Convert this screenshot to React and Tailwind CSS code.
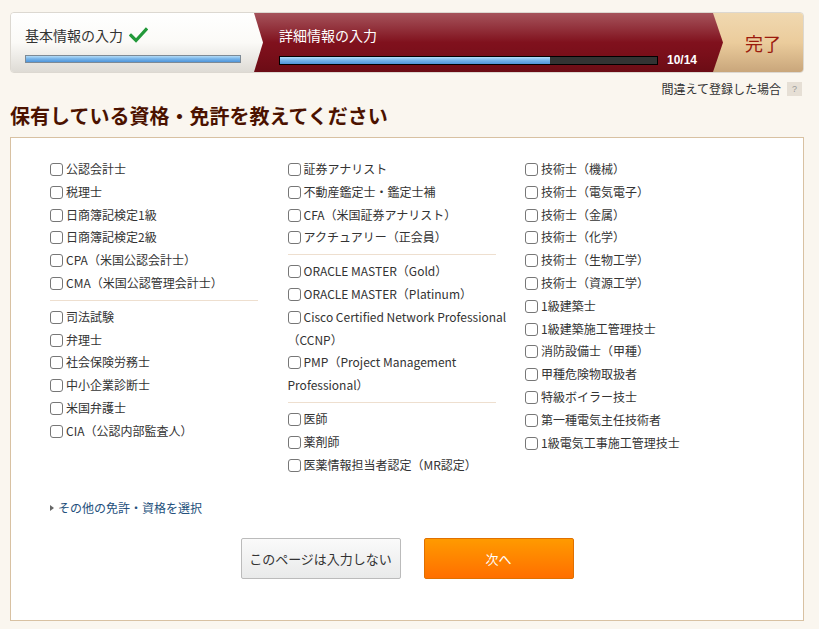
import React from 'react';

const col1a = ['公認会計士', '税理士', '日商簿記検定1級', '日商簿記検定2級', 'CPA（米国公認会計士）', 'CMA（米国公認管理会計士）'];
const col1b = ['司法試験', '弁理士', '社会保険労務士', '中小企業診断士', '米国弁護士', 'CIA（公認内部監査人）'];
const col2a = ['証券アナリスト', '不動産鑑定士・鑑定士補', 'CFA（米国証券アナリスト）', 'アクチュアリー（正会員）'];
const col2b = ['ORACLE MASTER（Gold）', 'ORACLE MASTER（Platinum）', ['Cisco Certified Network Professional', '（CCNP）'], ['PMP（Project Management', 'Professional）']];
const col2c = ['医師', '薬剤師', '医薬情報担当者認定（MR認定）'];
const col3 = ['技術士（機械）', '技術士（電気電子）', '技術士（金属）', '技術士（化学）', '技術士（生物工学）', '技術士（資源工学）', '1級建築士', '1級建築施工管理技士', '消防設備士（甲種）', '甲種危険物取扱者', '特級ボイラー技士', '第一種電気主任技術者', '1級電気工事施工管理技士'];

function Item({ label }) {
  const lines = Array.isArray(label) ? label : [label];
  return (
    <label className="block leading-[22.8px] whitespace-nowrap cursor-pointer">
      <span className="inline-block w-[13px] h-[13px] border border-[#777] rounded-[3px] bg-white align-[-2px] mr-[3px]" />
      {lines[0]}
      {lines[1] && (
        <>
          <br />
          {lines[1]}
        </>
      )}
    </label>
  );
}

function Sep() {
  return <div className="mt-[5px] mb-[5px] h-px bg-[#eedfcf]" />;
}

function Group({ items }) {
  return (
    <div>
      {items.map((it, i) => (
        <Item key={i} label={it} />
      ))}
    </div>
  );
}

export default function App() {
  return (
    <div className="min-h-[629px] bg-[#faf6ef] pl-[10px] pr-[15px] pt-[12px] text-[#333] font-[family-name:'Noto_Sans_CJK_JP',sans-serif]">
      {/* Step bar */}
      <div className="flex h-[61px] rounded-[4px] border border-[#dcd8d1] overflow-hidden">
        <div className="relative z-20 w-[252px] shrink-0 bg-[linear-gradient(to_bottom,#ffffff_0%,#fbfaf7_50%,#dedbd5_100%)] [clip-path:polygon(0_0,243px_0,100%_50%,243px_100%,0_100%)] pl-[14px] pt-[12px]">
          <div className="flex items-center text-[14px] leading-[20px] text-[#333]">
            基本情報の入力
            <svg className="ml-[6px]" width="19" height="16" viewBox="0 0 19 16">
              <path d="M2 8.5 L7 13.5 L17 2.5" fill="none" stroke="#23993a" strokeWidth="3.2" strokeLinecap="square" />
            </svg>
          </div>
          <div className="mt-[10px] w-[216px] h-[8px] border border-[#7d8a96] bg-[linear-gradient(to_bottom,#b5dcf7_0%,#79b6ea_45%,#4f95da_100%)]" />
        </div>
        <div className="relative z-10 -ml-[9px] w-[469px] shrink-0 bg-[linear-gradient(to_bottom,#a5535b_0%,#93333d_25%,#80111d_50%,#7a0f1a_70%,#6b0c15_100%)] [clip-path:polygon(0_0,459px_0,100%_50%,459px_100%,0_100%)] pl-[25px] pt-[12px]">
          <div className="text-[14px] leading-[20px] text-white">詳細情報の入力</div>
          <div className="mt-[9px] flex items-center">
            <div className="w-[379px] h-[9px] border border-black bg-[#333] flex">
              <div className="w-[270px] h-full bg-[linear-gradient(to_bottom,#b5dcf7_0%,#79b6ea_45%,#4f95da_100%)]" />
            </div>
            <span className="ml-[9px] text-[12px] font-bold text-white font-[family-name:'Liberation_Sans',sans-serif] leading-none">10/14</span>
          </div>
        </div>
        <div className="-ml-[10px] flex-1 bg-[linear-gradient(to_bottom,#f0d8b0_0%,#ebcc9c_50%,#c9a67b_100%)] pl-[10px] flex items-center justify-center">
          <span className="text-[18px] text-[#9b1a0c] leading-none">完了</span>
        </div>
      </div>

      {/* Mistake link */}
      <div className="mt-[7px] h-[17px] flex items-center justify-end pr-[2px]">
        <span className="text-[12px] leading-[17px] text-[#333]">間違えて登録した場合</span>
        <span className="ml-[6px] w-[15px] h-[14px] bg-[#e6dfd5] text-[#999] text-[9px] leading-[14px] text-center font-[family-name:'Liberation_Sans',sans-serif]">?</span>
      </div>

      {/* Heading */}
      <h1 className="mt-[5px] text-[20px] leading-[28px] font-bold text-[#4b1200]">保有している資格・免許を教えてください</h1>

      {/* Panel */}
      <div className="mt-[7px] border border-[#d8c1a2] bg-white pt-[20px] pb-[41px]">
        <div className="pl-[39px] grid grid-cols-[208px_208px_208px] gap-x-[29.5px] text-[12px] items-start">
          <div>
            <Group items={col1a} />
            <Sep />
            <Group items={col1b} />
          </div>
          <div>
            <Group items={col2a} />
            <Sep />
            <Group items={col2b} />
            <Sep />
            <Group items={col2c} />
          </div>
          <div>
            <Group items={col3} />
          </div>
        </div>

        <div className="pl-[39px] mt-[20px] flex items-center h-[23px] text-[12px]">
          <span className="w-0 h-0 border-y-[3.5px] border-y-transparent border-l-[4px] border-l-[#666] mr-[4px]" />
          <a className="text-[#24507c] leading-[23px]" href="#">その他の免許・資格を選択</a>
        </div>

        <div className="mt-[19px] flex justify-center gap-[23px]">
          <button className="w-[160px] h-[41px] border border-[#bbb] rounded-[2px] bg-[linear-gradient(to_bottom,#fafafa_0%,#e9eaea_100%)] text-[13px] text-[#333]">
            このページは入力しない
          </button>
          <button className="w-[150px] h-[41px] border border-[#e07000] rounded-[2px] bg-[linear-gradient(to_bottom,#ff9a00_0%,#ff6f00_100%)] text-[13px] text-white">
            次へ
          </button>
        </div>
      </div>
    </div>
  );
}
